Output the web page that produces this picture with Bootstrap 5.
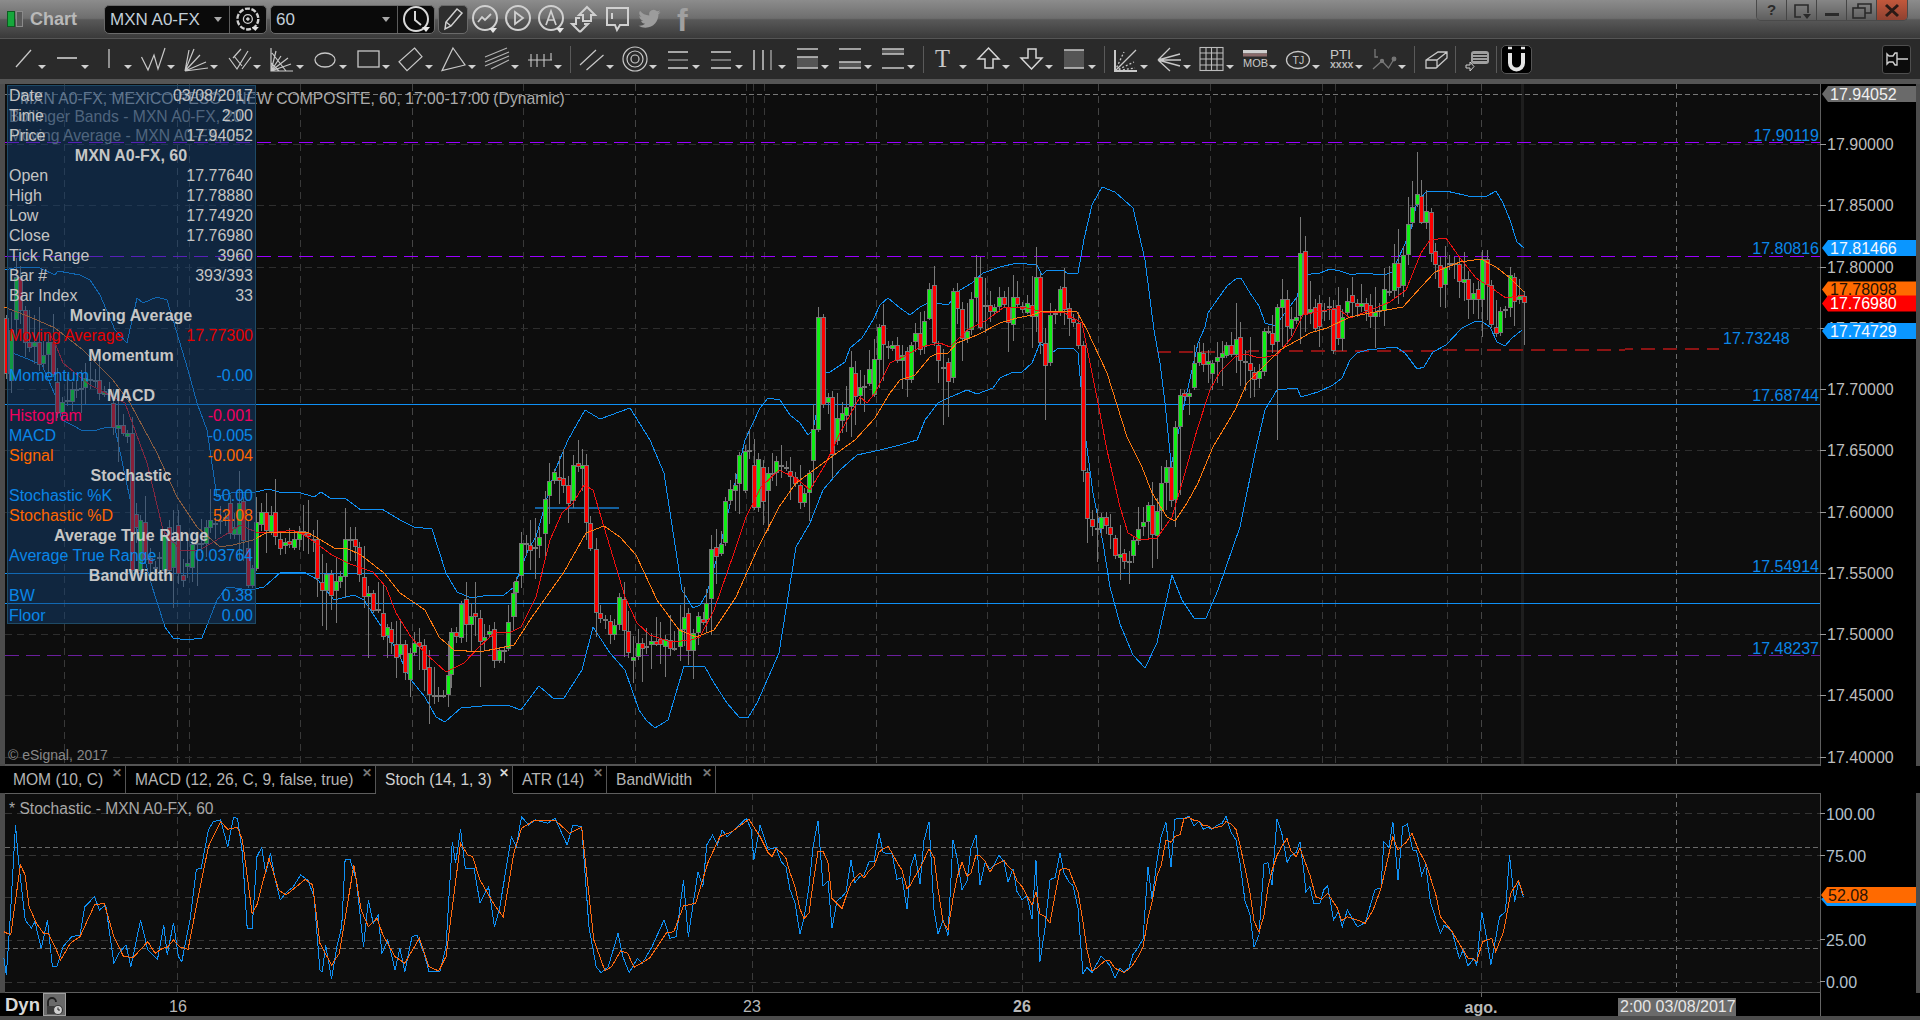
<!DOCTYPE html>
<html lang="en">
<head>
  <meta charset="UTF-8">
  <title>Chart</title>
  <link href="https://cdn.jsdelivr.net/npm/bootstrap@5.3.0/dist/css/bootstrap.min.css" rel="stylesheet">
  <style>
    html, body { margin: 0; height: 1020px; overflow: hidden; }
    body { background: #4c4c4c; font-family: "Liberation Sans", Arial, sans-serif; font-size: 16px; color: #c8c8c8; }
    svg text { font-family: "Liberation Sans", Arial, sans-serif; }
    svg text.es-serif { font-family: "Liberation Serif", serif; }

    /* title bar */
    .es-title { height: 38px; padding-left: 7px; background: linear-gradient(#8c8c8c 0, #6e6e6e 48%, #585858 52%, #3a3a3a 100%); }
    .es-logo { width: 17px; height: 16px; margin-right: 6px; }
    .es-name { width: 74px; font-size: 18px; font-weight: 700; color: #b9b9b9; }
    .es-field { height: 29px; background: #0a0a0a; border: 1px solid #6a6a6a; border-radius: 5px; }
    .es-field-sym { width: 163px; margin-right: 3px; }
    .es-field-int { width: 165px; margin-right: 3px; }
    .es-input { color: #c2ced8; font-size: 17px; padding-left: 5px; border-right: 1px solid #5c5c5c; height: 100%; line-height: 27px; position: relative; }
    .es-input-sym { width: 126px; }
    .es-input-int { width: 127px; }
    .es-input::after { content: ""; position: absolute; right: 7px; top: 11px; border: 4px solid transparent; border-top: 5px solid #a8a8a8; border-bottom: 0; }
    .es-tico { width: 36px; height: 27px; }
    .es-pen { width: 30px; height: 29px; background: #2e2e2e; border: 1px solid #6a6a6a; border-radius: 5px; }
    .es-hico { width: 33px; height: 30px; flex: none; }
    .es-hico-f { width: 33px; height: 38px; flex: none; }
    .es-win { height: 21px; margin-right: 12px; border-radius: 0 0 5px 5px; overflow: hidden; border: 1px solid #4a4a4a; border-top: 0; }
    .es-winbtn { width: 30px; height: 21px; background: linear-gradient(#868686, #5c5c5c); border-right: 1px solid #454545; color: #2a2a2a; font-weight: 700; font-size: 15px; line-height: 20px; text-align: center; }
    .es-winbtn-x { background: linear-gradient(#c2583c, #8c4030); border-right: 0; }

    /* toolbar */
    .es-tools { height: 41px; padding-left: 4px; background: #2a2a2a; border-top: 1px solid #555; }
    .es-tool { width: 43px; height: 30px; position: relative; flex: none; }
    .es-tool svg { position: absolute; left: 4px; top: 1px; width: 30px; height: 28px; }
    .es-caret { position: absolute; right: 1px; bottom: 5px; border: 4px solid transparent; border-top: 4px solid #d0d0d0; border-bottom: 0; }
    .es-sep { width: 1px; height: 27px; background: #5a5a5a; margin: 0 1px 0 7px; flex: none; }
    .es-sep-tight { margin: 0 1px; }
    .es-plain { width: 38px; flex: none; height: 30px; }
    .es-magnet { width: 31px; height: 29px; background: #000; border: 1px solid #555; border-radius: 5px; }
    .es-pin { width: 29px; height: 29px; background: #0c0c0c; border: 1px solid #4e4e4e; border-radius: 3px; margin-right: 9px; }
    .es-strip { height: 5px; background: #555; }

    /* panes */
    .es-pane { position: relative; width: 1920px; }
    .es-pane > svg { display: block; position: absolute; left: 0; top: 0; }
    .es-main { height: 682px; }
    .es-sub { height: 200px; }

    /* data window */
    .es-dw { position: absolute; left: 7px; top: 1px; width: 249px; height: 539px; background: rgba(19, 63, 113, .5); border: 1px solid #1e4a66; padding: 0 2px 0 1px; line-height: 20px; font-size: 16px; color: #c4c4c4; }
    .es-dw-row { height: 20px; white-space: nowrap; }
    .es-dw-head { height: 20px; text-align: center; font-weight: 700; color: #c6c6c6; white-space: nowrap; }
    .c-red { color: #e60000; } .c-mag { color: #f00060; } .c-blue { color: #0a86e8; } .c-org { color: #ff6600; }

    /* study tabs */
    .es-tabs { height: 27px; padding-left: 8px; background: #000; }
    .es-tab { height: 27px; line-height: 27px; padding-left: 9px; border-right: 1px solid #555; color: #b4b4b4; position: relative; flex: none; font-size: 15.6px; }
    .es-tab-first { padding-left: 5px; }
    .es-tab-on { background: #0d0d0d; color: #d0d0d0; }
    .es-tab-x { position: absolute; right: 3px; top: 0; font-size: 12px; line-height: 14px; color: #777; font-weight: 700; }
    .es-tab-on .es-tab-x { color: #d8d8d8; }
    .w-mom { width: 118px; } .w-macd { width: 250px; } .w-stoch { width: 137px; } .w-atr { width: 94px; } .w-bw { width: 109px; }

    /* time axis */
    .es-axis { height: 23px; background: #000; position: relative; padding-left: 5px; }
    .es-axis > svg { position: absolute; left: 0; top: 0; }
    .es-dyn { font-size: 18.5px; font-weight: 700; color: #d8d8d8; width: 38px; line-height: 23px; position: relative; }
    .es-lock { width: 23px; height: 23px; background: #6a6a6a; border: 1px solid #a0a0a0; position: relative; }
  </style>
</head>
<body>

<!-- title bar -->
<div class="es-title d-flex align-items-center">
  <svg class="es-logo flex-none" viewBox="0 0 17 16"><rect x="0.500" y="0.500" width="7" height="15" fill="#17a83c" stroke="#0d5c20"/><rect x="9.500" y="0.500" width="6" height="15" fill="#5a5a5a" stroke="#8a8a8a"/></svg>
  <div class="es-name">Chart</div>
  <div class="es-field es-field-sym d-flex align-items-center">
    <div class="es-input es-input-sym">MXN A0-FX</div>
    <svg class="es-tico" viewBox="0 0 36 27" fill="none" stroke="#d0d0d0"><circle cx="18" cy="13" r="10.500" stroke-width="2.400" stroke-dasharray="5 1.600"/><circle cx="18" cy="13" r="4.500" stroke-width="1.300"/><circle cx="18" cy="13" r="1.300" fill="#d0d0d0"/><path d="M22 21h7l-3.500 4z" fill="#e0e0e0" stroke="none"/></svg>
  </div>
  <div class="es-field es-field-int d-flex align-items-center">
    <div class="es-input es-input-int">60</div>
    <svg class="es-tico" viewBox="0 0 36 27" fill="none" stroke="#d8d8d8" stroke-width="2"><circle cx="18" cy="13" r="12"/><path d="M17 5v9l6 5"/><path d="M24 21h8l-4 5z" fill="#e8e8e8" stroke="none"/></svg>
  </div>
  <div class="es-pen d-flex align-items-center justify-content-center">
    <svg width="24" height="24" viewBox="0 0 24 24" fill="none" stroke="#d0d0d0" stroke-width="1.500"><path d="M4 22l1-7L16 2l5 4L10 19z"/><path d="M5 15l5 4"/></svg>
  </div>
  <svg class="es-hico" viewBox="0 0 33 30" fill="none" stroke="#d0d0d0" stroke-width="2"><circle cx="17" cy="14" r="12"/><path d="M10 18l4-5 3 3 6-6" stroke-width="1.800"/><path d="M21 24h8l-4 5z" fill="#e4e4e4" stroke="none"/></svg>
  <svg class="es-hico" viewBox="0 0 33 30" fill="none" stroke="#d0d0d0" stroke-width="2"><circle cx="17" cy="14" r="12"/><path d="M14 8l8 6-8 6z" stroke-width="1.800"/></svg>
  <svg class="es-hico" viewBox="0 0 33 30" fill="none" stroke="#d0d0d0" stroke-width="2"><circle cx="17" cy="14" r="12"/><path d="M12 21l5-14 5 14M14 16h6" stroke-width="1.700"/><path d="M22 24h8l-4 5z" fill="#e4e4e4" stroke="none"/></svg>
  <svg class="es-hico" viewBox="0 0 33 30" fill="none" stroke="#d0d0d0" stroke-width="2"><path d="M20 3l8 8h-4v6h-8v-6h-4z"/><path d="M13 28l-8-8h4v-6h4M13 28l8-8h-4"/></svg>
  <svg class="es-hico" viewBox="0 0 33 30" fill="none" stroke="#d0d0d0" stroke-width="2"><path d="M7 4h21v17H20l-3 5-2-5H7z"/><path d="M12 9v6"/></svg>
  <svg class="es-hico" viewBox="-4 -3 32 30" fill="#9c9c9c"><path d="M23 4.900c-.8.4-1.700.6-2.600.8.9-.6 1.600-1.400 2-2.500-.9.5-1.800.9-2.900 1.100A4.500 4.500 0 0 0 11.800 8.400 12.900 12.900 0 0 1 2.500 3.700a4.500 4.500 0 0 0 1.400 6 4.500 4.500 0 0 1-2-.6v.1c0 2.200 1.600 4 3.600 4.400-.7.2-1.400.2-2 .1.6 1.800 2.200 3.100 4.200 3.100A9.100 9.100 0 0 1 1 18.700a12.800 12.800 0 0 0 7 2c8.300 0 12.900-6.900 12.900-12.900v-.6c.9-.6 1.600-1.400 2.100-2.300z"/></svg>
  <svg class="es-hico-f" viewBox="0 0 33 38"><text x="11" y="31" font-size="32" font-weight="700" fill="#a0a0a0">f</text></svg>
  <div class="es-win d-flex align-self-start ms-auto">
    <div class="es-winbtn">?</div>
    <div class="es-winbtn"><svg width="22" height="18" viewBox="0 0 22 18" fill="none" stroke="#2a2a2a" stroke-width="1.600"><path d="M17 11V3H4v12h6"/><path d="M12 12h8l-4 5z" fill="#2a2a2a" stroke="none"/></svg></div>
    <div class="es-winbtn"><svg width="18" height="18" viewBox="0 0 18 18"><rect x="2" y="11" width="14" height="3" fill="#2a2a2a"/></svg></div>
    <div class="es-winbtn"><svg width="22" height="18" viewBox="0 0 22 18" fill="none" stroke="#2a2a2a" stroke-width="1.600"><rect x="2" y="6" width="12" height="10"/><path d="M7 6V2h13v9h-6"/></svg></div>
    <div class="es-winbtn es-winbtn-x"><svg width="18" height="18" viewBox="0 0 18 18" stroke="#2a1a16" stroke-width="3"><path d="M3 3l12 11M15 3L3 14"/></svg></div>
  </div>
</div>

<!-- toolbar -->
<div class="es-tools d-flex align-items-center">
  <div class="es-tool"><svg viewBox="0 0 30 28" fill="none" stroke="#c8c8c8" stroke-width="1.300"><path d="M8 22L23 5"/></svg><i class="es-caret"></i></div>
  <div class="es-tool"><svg viewBox="0 0 30 28" fill="none" stroke="#d0d0d0" stroke-width="1.600"><path d="M6 13h20"/></svg><i class="es-caret"></i></div>
  <div class="es-tool"><svg viewBox="0 0 30 28" fill="none" stroke="#c8c8c8" stroke-width="1.300"><path d="M15 4v19"/></svg><i class="es-caret"></i></div>
  <div class="es-tool"><svg viewBox="0 0 30 28" fill="none" stroke="#c8c8c8" stroke-width="1.200"><path d="M4.500 12L11 25l6-15 4 14 7-21"/></svg><i class="es-caret"></i></div>
  <div class="es-tool"><svg viewBox="0 0 30 28" fill="none" stroke="#c8c8c8" stroke-width="1.200"><path d="M5 26L14 4M5 26L20 10M5 26L26 17M5 26L28 23M5 26L9 5"/></svg><i class="es-caret"></i></div>
  <div class="es-tool"><svg viewBox="0 0 30 28" fill="none" stroke="#c8c8c8" stroke-width="1.200"><path d="M6 13l8 11 3-5M11 11l8 10M18 4l-8 9M25 6l-8 13M28 12l-9 12"/></svg><i class="es-caret"></i></div>
  <div class="es-tool"><svg viewBox="0 0 30 28" fill="none" stroke="#c8c8c8" stroke-width="1.200"><path d="M5 3v23h22M5 26L10 6M5 26L15 11M5 26L22 13M5 26L25 19M5 18l8 8M6 8l14 18"/></svg><i class="es-caret"></i></div>
  <div class="es-tool"><svg viewBox="0 0 30 28" fill="none" stroke="#c8c8c8" stroke-width="1.300"><ellipse cx="16" cy="15" rx="10" ry="7"/></svg><i class="es-caret"></i></div>
  <div class="es-tool"><svg viewBox="0 0 30 28" fill="none" stroke="#c8c8c8" stroke-width="1.300"><rect x="6" y="6" width="21" height="16"/></svg><i class="es-caret"></i></div>
  <div class="es-tool"><svg viewBox="0 0 30 28" fill="none" stroke="#c8c8c8" stroke-width="1.200"><path d="M19.500 3L27 11.700 12 25.700 4 16.700z"/></svg><i class="es-caret"></i></div>
  <div class="es-tool"><svg viewBox="0 0 30 28" fill="none" stroke="#c8c8c8" stroke-width="1.200"><path d="M15 3l12 17-23 5.700z"/></svg><i class="es-caret"></i></div>
  <div class="es-tool"><svg viewBox="0 0 30 28" fill="none" stroke="#b4b4b4" stroke-width="1.100"><path d="M4 12L26 3M4 17L28 7M4 21L28 11M10 24l18-9"/></svg><i class="es-caret"></i></div>
  <div class="es-tool"><svg viewBox="0 0 30 28" fill="none" stroke="#c8c8c8" stroke-width="1.100"><path d="M4 15h24M7 9v13M13 9v13M20 9v13M27 8v7"/></svg><i class="es-caret"></i></div>
  <div class="es-sep"></div>
  <div class="es-tool"><svg viewBox="0 0 30 28" fill="none" stroke="#c8c8c8" stroke-width="1.200"><path d="M4 20L20 5M10.500 25L27.500 10"/></svg><i class="es-caret"></i></div>
  <div class="es-tool"><svg viewBox="0 0 30 28" fill="none" stroke="#c8c8c8" stroke-width="1.200"><circle cx="16" cy="14" r="12"/><circle cx="16" cy="14" r="8"/><circle cx="16" cy="14" r="4"/></svg><i class="es-caret"></i></div>
  <div class="es-tool"><svg viewBox="0 0 30 28" fill="none" stroke="#c8c8c8" stroke-width="1.600"><path d="M6 7h20"/><path d="M6 15h20" stroke="#8a8a8a"/><path d="M6 23h20"/></svg><i class="es-caret"></i></div>
  <div class="es-tool"><svg viewBox="0 0 30 28" fill="none" stroke="#c8c8c8" stroke-width="1.600"><path d="M6 7h20"/><path d="M6 15h20" stroke="#8a8a8a"/><path d="M6 23h20"/></svg><i class="es-caret"></i></div>
  <div class="es-tool"><svg viewBox="0 0 30 28" fill="none" stroke="#c8c8c8" stroke-width="1.500"><path d="M6 5v20M15 5v20"/><path d="M23 5v20" stroke="#9a9a9a"/></svg><i class="es-caret"></i></div>
  <div class="es-tool"><svg viewBox="0 0 30 28" fill="none" stroke="#c8c8c8" stroke-width="1.500"><rect x="6" y="12" width="21" height="11" fill="#555" stroke="none"/><path d="M6 4h21M6 12h21M6 23h21"/></svg><i class="es-caret"></i></div>
  <div class="es-tool"><svg viewBox="0 0 30 28" fill="none" stroke="#c8c8c8" stroke-width="1.500"><rect x="5" y="17" width="22" height="6" fill="#555" stroke="none"/><path d="M5 4h22M5 17h22M5 23h22"/></svg><i class="es-caret"></i></div>
  <div class="es-tool"><svg viewBox="0 0 30 28" fill="none" stroke="#c8c8c8" stroke-width="1.500"><rect x="5" y="4" width="22" height="5" fill="#555" stroke="none"/><path d="M5 4h22M5 9h22M5 23h22"/></svg><i class="es-caret"></i></div>
  <div class="es-sep"></div>
  <div class="es-tool"><svg viewBox="0 0 30 28"><text x="6" y="22.400" font-size="24.500" fill="#c8c8c8" class="es-serif">T</text></svg><i class="es-caret"></i></div>
  <div class="es-tool"><svg viewBox="0 0 30 28" fill="none" stroke="#d8d8d8" stroke-width="1.500"><path d="M16.500 3L27 14h-6v9h-8v-9H6z"/></svg><i class="es-caret"></i></div>
  <div class="es-tool"><svg viewBox="0 0 30 28" fill="none" stroke="#d8d8d8" stroke-width="1.500"><path d="M16.500 24L27 13h-6V4h-8v9H6z"/></svg><i class="es-caret"></i></div>
  <div class="es-tool"><svg viewBox="0 0 30 28" fill="none" stroke="#c8c8c8" stroke-width="1.500"><rect x="6" y="5" width="20" height="18" fill="#555" stroke="none"/><path d="M6 5h20M6 23h20"/></svg><i class="es-caret"></i></div>
  <div class="es-sep"></div>
  <div class="es-tool"><svg viewBox="0 0 30 28" fill="none" stroke="#c8c8c8" stroke-width="1.300"><path d="M5 5v21h22" stroke-width="2"/><path d="M5 26L26 5"/><path d="M5 26l9-19M5 26L24 17M5 26l20-3" stroke-dasharray="2 2"/></svg><i class="es-caret"></i></div>
  <div class="es-tool"><svg viewBox="0 0 30 28" fill="none" stroke="#c8c8c8" stroke-width="1.300"><path d="M5 15L17 3M5 15L27 9M5 15H28M5 15l22 6M5 15l12 11"/></svg><i class="es-caret"></i></div>
  <div class="es-tool"><svg viewBox="0 0 30 28" fill="none" stroke="#bcbcbc" stroke-width="1.100"><rect x="4" y="2.500" width="23" height="23"/><path d="M4 8h23M4 14h23M4 20h23M10 2.500v23M15.500 2.500v23M21 2.500v23"/></svg><i class="es-caret"></i></div>
  <div class="es-tool"><svg viewBox="0 0 30 28"><rect x="4" y="5" width="24" height="3.500" fill="#cfcfcf"/><rect x="4" y="8.500" width="24" height="3" fill="#8a6a6a"/><text x="4" y="22" font-size="11" fill="#c8c8c8">MOB</text></svg><i class="es-caret"></i></div>
  <div class="es-tool"><svg viewBox="0 0 30 28" fill="none" stroke="#c8c8c8" stroke-width="1.300"><ellipse cx="16" cy="15" rx="11.500" ry="8.500"/><text x="10.500" y="19" font-size="10.500" fill="#c8c8c8" stroke="none">TJ</text></svg><i class="es-caret"></i></div>
  <div class="es-tool"><svg viewBox="0 0 30 28"><text x="5" y="14" font-size="13.500" fill="#c8c8c8">PTI</text><text x="5" y="23" font-size="10.500" font-weight="700" fill="#b8b8b8">xxxx</text></svg><i class="es-caret"></i></div>
  <div class="es-tool"><svg viewBox="0 0 30 28" fill="none" stroke="#777" stroke-width="1.300"><path d="M7 4v8h3"/><path d="M5 24l9-8 6.500 7L26 14"/><circle cx="26" cy="14" r="1.800" fill="#777"/><circle cx="14" cy="16" r="1.500" fill="#777"/></svg><i class="es-caret"></i></div>
  <div class="es-sep"></div>
  <div class="es-plain"><svg width="38" height="30" viewBox="0 0 38 30" fill="none" stroke="#c8c8c8" stroke-width="1.300"><path d="M10 24v-8L22 8h9v6L20 24zM10 16h11v8M21 16L31 8"/></svg></div>
  <div class="es-sep es-sep-tight"></div>
  <div class="es-plain"><svg width="38" height="30" viewBox="0 0 38 30"><rect x="14" y="7" width="18" height="13" rx="3" fill="#a0a0a0"/><path d="M16 10.500h14M16 13.500h14M16 16.500h14" stroke="#2a2a2a" stroke-width="1.200"/><path d="M9 21h4v-3l4 4.500-4 4.500v-3H9z" fill="#2a2a2a" stroke="#d0d0d0"/></svg></div>
  <div class="es-sep es-sep-tight me-1"></div>
  <div class="es-magnet d-flex align-items-center justify-content-center"><svg width="25" height="27" viewBox="0 0 25 27" fill="none" stroke="#e4e4e4"><path d="M6 7v10a6.500 6.500 0 0 0 13 0V7" stroke-width="4"/><path d="M4 2h4M17 2h4" stroke-width="2.500"/></svg></div>
  <div class="es-pin d-flex align-items-center justify-content-center ms-auto"><svg width="24" height="16" viewBox="0 0 24 16" fill="none" stroke="#cfcfcf" stroke-width="1.400"><path d="M2 3l2 2h4l2-3h2v12h-2l-2-3H4l-2 2zM12 8h11"/></svg></div>
</div>
<div class="es-strip"></div>

<!-- main price pane -->
<div class="es-pane es-main">
  <svg id="mainChart" width="1920" height="682" viewBox="0 84 1920 682"></svg>
  <div class="es-dw">
    <div class="es-dw-row d-flex justify-content-between"><span>Date</span><span>03/08/2017</span></div>
    <div class="es-dw-row d-flex justify-content-between"><span>Time</span><span>2:00</span></div>
    <div class="es-dw-row d-flex justify-content-between"><span>Price</span><span>17.94052</span></div>
    <div class="es-dw-head">MXN A0-FX, 60</div>
    <div class="es-dw-row d-flex justify-content-between"><span>Open</span><span>17.77640</span></div>
    <div class="es-dw-row d-flex justify-content-between"><span>High</span><span>17.78880</span></div>
    <div class="es-dw-row d-flex justify-content-between"><span>Low</span><span>17.74920</span></div>
    <div class="es-dw-row d-flex justify-content-between"><span>Close</span><span>17.76980</span></div>
    <div class="es-dw-row d-flex justify-content-between"><span>Tick Range</span><span>3960</span></div>
    <div class="es-dw-row d-flex justify-content-between"><span>Bar #</span><span>393/393</span></div>
    <div class="es-dw-row d-flex justify-content-between"><span>Bar Index</span><span>33</span></div>
    <div class="es-dw-head">Moving Average</div>
    <div class="es-dw-row d-flex justify-content-between c-red"><span>Moving Average</span><span>17.77300</span></div>
    <div class="es-dw-head">Momentum</div>
    <div class="es-dw-row d-flex justify-content-between c-blue"><span>Momentum</span><span>-0.00</span></div>
    <div class="es-dw-head">MACD</div>
    <div class="es-dw-row d-flex justify-content-between c-mag"><span>Histogram</span><span>-0.001</span></div>
    <div class="es-dw-row d-flex justify-content-between c-blue"><span>MACD</span><span>-0.005</span></div>
    <div class="es-dw-row d-flex justify-content-between c-org"><span>Signal</span><span>-0.004</span></div>
    <div class="es-dw-head">Stochastic</div>
    <div class="es-dw-row d-flex justify-content-between c-blue"><span>Stochastic %K</span><span>50.00</span></div>
    <div class="es-dw-row d-flex justify-content-between c-org"><span>Stochastic %D</span><span>52.08</span></div>
    <div class="es-dw-head">Average True Range</div>
    <div class="es-dw-row d-flex justify-content-between c-blue"><span>Average True Range</span><span>0.03764</span></div>
    <div class="es-dw-head">BandWidth</div>
    <div class="es-dw-row d-flex justify-content-between c-blue"><span>BW</span><span>0.38</span></div>
    <div class="es-dw-row d-flex justify-content-between c-blue"><span>Floor</span><span>0.00</span></div>
  </div>
</div>

<!-- study tabs -->
<div class="es-tabs d-flex">
  <div class="es-tab es-tab-first w-mom">MOM (10, C)<span class="es-tab-x">✕</span></div>
  <div class="es-tab w-macd">MACD (12, 26, C, 9, false, true)<span class="es-tab-x">✕</span></div>
  <div class="es-tab es-tab-on w-stoch">Stoch (14, 1, 3)<span class="es-tab-x">✕</span></div>
  <div class="es-tab w-atr">ATR (14)<span class="es-tab-x">✕</span></div>
  <div class="es-tab w-bw">BandWidth<span class="es-tab-x">✕</span></div>
</div>

<!-- stochastic pane -->
<div class="es-pane es-sub">
  <svg id="subChart" width="1920" height="200" viewBox="0 793 1920 200"></svg>
</div>

<!-- time axis -->
<div class="es-axis d-flex">
  <svg width="1920" height="23" viewBox="0 993 1920 23">
    <g fill="#b8b8b8" font-size="16" text-anchor="middle">
      <text x="178" y="1012">16</text>
      <text x="752" y="1012">23</text>
      <text x="1022" y="1012" font-weight="700">26</text>
      <text x="1481" y="1013" font-weight="700">ago.</text>
    </g>
    <rect x="1618" y="998" width="118" height="18" fill="#6a6a6a"/>
    <text x="1620" y="1012" font-size="16" fill="#e6e6e6">2:00 03/08/2017</text>
    <path d="M1820.500 993v23M1481.500 993v4" stroke="#666"/>
  </svg>
  <div class="es-dyn">Dyn</div>
  <div class="es-lock"><svg width="21" height="21" viewBox="0 0 21 21" fill="none" stroke="#1e1e1e" stroke-width="1.800"><path d="M4 10V6a4 4 0 0 1 8 0"/><rect x="3" y="10" width="9" height="8" fill="#3a3a3a" stroke="none"/><circle cx="14" cy="14" r="4.500" fill="#d0d0d0" stroke="#3a3a3a" stroke-width="1.200"/><path d="M14 11.500V14h2" stroke-width="1"/></svg></div>
</div>

<script src="https://cdn.jsdelivr.net/npm/bootstrap@5.3.0/dist/js/bootstrap.bundle.min.js"></script>
<script>
  // bars traced from the chart, in segments: zoomX type top bottom
  const segs = [
    { x: z => z / 3, y: z => 80 + z / 3, d: '19 R 715 880,33 G 750 900,47 G 590 715,61 R 590 690,75 R 690 785,88 R 785 800,103 G 785 797,116 R 785 850,130 G 825 850,145 G 785 820,158 R 785 880' },
    { x: z => z / 3, y: z => 370 + z / 3, d: '172 R 35 125,187 G 95 125,201 D 90 90,215 G 58 95,228 D 58 58,242 D 55 55,256 G 25 52,270 D 28 28,285 D 30 30,298 R 30 70,312 G 62 70,326 D 70 70,340 R 98 170,353 G 165 172,368 R 165 190,381 G 188 194,395 R 190 600,408 R 432 470,421 G 450 600,435 R 455 565,450 R 565 580,464 D 590 590,478 D 560 560,492 G 495 600,507 R 470 600,520 G 515 590,535 R 465 610,548 R 615 630,562 G 580 590,575 G 522 590,590 D 520 520,603 D 518 518,617 G 470 518,630 G 450 470,645 D 458 458,660 D 450 450,675 D 440 440,690 R 400 490,703 G 470 490,716 G 398 490,729 R 392 510,743 R 535 645,756 G 595 645' },
    { x: z => 250 + z / 2.8, y: z => 440 + z / 3, d: '18 G 245 382,31 G 215 250,45 R 215 268,58 G 226 274,71 R 215 288,85 R 296 322,97 G 305 312,110 R 303 306,124 G 296 320,136 G 272 296,148 R 272 278,161 R 278 288,175 D 296 296,188 R 296 412,201 R 425 450,214 G 402 450,227 R 402 466,240 G 424 450,253 G 408 424,267 G 296 408,280 D 296 296,293 R 298 318,304 R 322 402,318 R 410 466,331 G 458 466,343 R 458 508,357 D 507 507,371 R 518 588,383 G 562 586,396 R 566 606,409 R 612 650,421 G 612 642,435 R 612 695,447 G 638 715,460 G 608 634,474 R 606 618,487 R 616 688,500 R 680 762,514 D 764 764,527 D 764 764,541 D 764 764,553 G 704 760,563 G 575 702,578 R 575 588,592 G 493 592,604 R 478 552,618 G 528 552,630 R 520 526,643 R 535 604,656 G 592 598,668 G 572 580,683 R 568 660,696 G 630 660,710 D 630 630,722 G 545 624,735 G 458 528,746 G 422 455,760 G 308 405,773 D 310 310,785 R 316 330,797 D 320 320,810 G 292 316,825 G 178 280,838 G 122 165,851 G 97 122,864 R 111 118,877 R 115 136,890 R 136 190,903 G 76 180,917 R 70 78,929 G 75 80,942 R 74 246,953 R 248 322,968 R 326 514,981 R 518 534,994 D 536 536,1007 R 542 582,1020 G 556 582,1033 G 472 552,1046 R 476 570,1059 R 572 636,1072 G 650 658,1085 G 608 646,1097 R 608 624,1110 D 618 618,1123 G 604 612,1136 R 602 608,1149 R 598 612,1162 G 598 618,1175 R 600 624,1188 D 624 624,1203 G 568 618,1214 G 530 566,1227 R 518 628,1241 G 578 628,1254 G 528 575,1267 R 536 542,1278 G 488 536,1291 G 326 474,1305 R 320 348,1318 G 312 338,1330 G 184 306,1345 G 146 180,1358 G 134 148,1370 G 46 130,1385 G 32 150,1398 D 30 30,1410 R 74 200,1422 G 56 200,1435 R 82 184,1449 G 100 152,1461 D 98 98,1474 G 62 94,1488 D 76 76,1500 D 80 80,1513 R 92 106,1527 R 112 130,1540 R 134 186,1552 G 158 184,1565 G 100 156' },
    { x: z => 800 + z / 3, y: z => 240 + z / 3, d: '40 G 568 660,55 G 232 568,68 R 232 492,83 G 472 486,97 R 470 640,111 G 535 600,125 G 520 540,138 G 502 525,152 G 382 498,165 R 398 466,181 G 442 466,193 D 437 437,208 G 388 430,221 G 356 460,236 G 262 358,250 R 254 312,264 D 318 318,277 G 315 320,291 R 314 358,305 G 344 358,320 R 334 418,334 G 316 418,346 G 280 305,361 R 280 328,373 G 244 318,388 G 146 232,403 R 134 304,415 R 314 360,430 D 380 380,445 R 367 424,458 G 154 412,472 R 154 205,487 R 208 294,500 G 272 292,513 G 178 268,529 G 112 172,541 R 112 262,555 D 196 196,569 R 196 214,583 G 202 214,598 G 172 198,611 R 172 192,625 R 200 244,640 G 172 254,652 R 172 192,667 R 197 207,682 G 188 214,695 R 194 228,709 G 110 226,721 R 110 304,736 R 308 374,751 G 226 368,765 D 220 220,779 G 146 216,793 R 140 205,806 R 203 234,820 R 238 244,835 R 248 314' },
    { x: z => 1070 + z / 3, y: z => 330 + z / 3, d: '38 R 45 420,52 R 425 562,67 R 568 588,80 D 593 593,94 G 562 594,107 R 562 586,121 R 590 612,136 R 625 676,149 G 672 676,163 R 670 694,177 D 692 692,190 G 630 676,205 G 598 630,220 G 577 589,233 G 526 574,247 R 526 612,260 G 542 615,274 G 458 538,289 G 410 454,302 R 410 508,316 G 292 508' },
    { x: z => 1170 + z / 3, y: z => 200 + z / 3, d: '30 G 584 678,43 R 580 586,58 G 578 583,73 G 488 560,86 G 457 487,100 R 458 490,113 G 482 492,127 G 490 520,142 G 472 485,155 G 458 470,169 G 434 463,184 R 434 462,197 G 416 462,211 R 412 480,226 D 484 484,239 R 490 512,253 R 515 535,268 G 514 535,281 G 394 515,294 D 392 392,307 R 398 430,322 G 322 424,337 G 298 322,350 R 298 378,364 G 358 384,379 G 350 360,391 G 160 346,406 R 152 340,421 G 326 336,434 R 320 382,448 R 310 380,462 D 330 330,476 D 318 318,490 R 326 448,503 R 314 414,517 G 350 414,532 G 302 336,545 R 286 306,560 R 310 318,574 G 310 318,587 R 308 328' },
    { x: z => 1360 + z / 2.8, y: z => 130 + z / 3, d: '28 R 525 558,41 G 545 556,54 D 540 540,68 G 478 542,81 D 482 482,94 G 398 478,107 R 398 470,120 G 376 466,133 G 282 372,146 G 232 276,159 G 193 222,172 R 197 274,185 G 243 276,198 R 245 368,211 R 362 402,224 R 406 472,237 G 410 460,250 D 400 400,263 D 400 400,276 R 402 454,290 G 447 454,303 R 447 508,316 G 490 508,329 R 478 508,342 G 388 508,355 R 388 462,368 R 464 580,380 R 592 610,393 G 542 606,406 D 536 536,419 G 435 532,432 R 440 513,445 G 497 505,458 R 497 516' }
  ];

  // a few long wicks read off the chart: x, top, bottom
  const wickFix = [[1416, 152, 0], [1300, 217, 0], [1305, 236, 0], [369, 0, 658], [479, 0, 687], [943, 0, 425], [948, 0, 417], [1277, 0, 440], [1485, 0, 345], [1522, 270, 330], [688, 0, 665], [1045, 0, 420], [1180, 0, 495]];

  let seed = 7;
  function rnd() { seed = (seed * 16807) % 2147483647; return seed / 2147483647; }

  const bars = [];
  segs.forEach(s => s.d.split(',').forEach(t => {
    const p = t.split(' ');
    const x = Math.round(s.x(+p[0])), top = s.y(+p[2]), bot = s.y(+p[3]);
    let hi = top - 3 - rnd() * rnd() * 38, lo = bot + 3 + rnd() * rnd() * 40;
    wickFix.forEach(f => {
      if (Math.abs(f[0] - x) < 2) { if (f[1]) hi = f[1]; if (f[2]) lo = f[2]; }
    });
    bars.push({ x, t: p[1], top, bot, hi, lo });
  }));

  const upper = '5,270 18,267 40,268 55,275 58,271 80,275 90,280 100,295 115,330 127,343 137,298 143,303 157,297 167,300 188,370 197,403 207,430 217,497 235,492 256,492 268,489 279,492 298,492 314,497 321,492 330,498 346,499 361,510 382,509 400,520 414,527 432,529 446,573 457,592 471,598 489,595 504,595 514,587 529,548 536,537 554,473 568,440 585,410 600,419 630,408 650,440 664,473 682,590 693,608 700,605 707,593 721,543 745,440 760,408 768,398 780,400 790,415 800,423 808,435 813,430 817,410 825,373 830,372 845,362 850,348 862,338 873,320 880,305 888,298 900,308 910,315 920,307 930,302 948,305 960,290 972,283 983,273 1000,267 1017,263 1037,265 1042,275 1047,270 1063,270 1068,274 1078,273 1084,239 1092,205 1102,187 1115,192 1133,208 1145,260 1154,330 1160,363 1165,403 1170,453 1171,467 1183,410 1192,370 1198,343 1205,327 1208,313 1217,300 1227,286 1237,278 1241,278 1250,293 1259,306 1265,323 1275,326 1285,313 1297,297 1303,275 1320,273 1330,269 1340,271 1352,275 1360,273 1385,275 1392,272 1410,233 1417,202 1426,192 1446,191 1464,195 1472,197 1487,196 1496,191 1503,203 1510,220 1517,242 1524,248';
  const lower = '10,352 23,357 42,365 55,395 62,420 72,425 83,431 97,430 107,427 115,428 133,513 150,580 165,627 173,638 187,640 202,638 217,600 227,587 250,590 264,587 280,573 304,572 318,580 334,600 354,595 364,600 375,617 395,647 411,680 425,697 436,717 445,722 461,708 482,706 507,705 521,710 539,686 554,699 564,698 582,670 593,627 610,653 625,670 639,710 646,720 655,728 668,720 684,666 705,667 714,683 727,703 739,717 748,718 757,703 779,653 796,547 810,523 823,490 840,470 857,455 880,450 900,445 917,440 925,420 938,403 948,398 967,390 977,394 993,388 1000,378 1013,372 1022,372 1032,363 1040,343 1052,353 1057,349 1073,348 1078,353 1085,433 1093,493 1103,543 1110,587 1120,624 1133,655 1145,668 1157,643 1172,575 1182,600 1194,618 1206,618 1218,590 1240,527 1255,453 1265,410 1277,390 1297,388 1301,397 1318,392 1333,385 1342,378 1350,360 1357,353 1367,350 1396,347 1405,353 1417,369 1424,367 1433,352 1446,345 1462,328 1474,322 1481,321 1490,327 1497,342 1505,346 1512,338 1522,330';
  const red = '50,335 55,343 63,363 90,385 125,403 147,463 163,530 180,550 200,550 225,535 240,525 256,532 271,533 293,530 304,535 316,543 332,555 350,564 373,572 386,587 396,613 411,637 425,653 446,672 464,663 479,647 496,632 509,633 521,627 536,597 550,540 562,513 573,503 584,485 593,490 607,537 625,597 637,623 650,635 671,642 691,640 700,637 714,610 734,553 746,517 761,487 779,470 796,478 810,490 825,465 840,433 860,397 867,403 875,393 890,363 907,355 920,347 940,343 950,347 967,330 987,320 1003,308 1023,307 1043,312 1063,312 1082,323 1098,403 1107,450 1120,507 1128,533 1140,540 1157,538 1172,517 1185,473 1197,430 1210,390 1220,372 1235,357 1245,354 1260,358 1277,355 1292,337 1303,315 1317,312 1337,308 1350,318 1363,313 1390,302 1406,290 1421,253 1430,240 1446,238 1460,258 1476,278 1490,287 1506,298 1524,295';
  const orange = '4,307 30,317 55,328 83,350 113,380 130,403 157,453 177,497 197,527 220,547 233,545 253,540 266,533 286,532 307,532 321,540 334,548 346,548 361,555 384,573 400,593 425,610 439,637 454,650 479,652 500,648 514,645 532,617 564,572 586,533 604,526 620,537 636,555 657,600 679,630 696,637 714,630 736,597 757,550 779,507 796,483 807,475 830,458 855,440 875,418 890,393 900,380 915,375 930,357 938,353 948,353 957,343 977,335 1000,323 1017,318 1032,315 1043,311 1063,311 1077,312 1087,330 1107,373 1127,437 1142,467 1152,493 1167,517 1175,521 1187,503 1198,483 1213,447 1235,410 1247,383 1267,363 1280,350 1298,340 1310,333 1327,328 1350,317 1370,313 1403,307 1421,287 1435,272 1460,262 1481,259 1496,267 1510,278 1524,292';

  const strong = [177, 412, 635, 876, 1098, 1321, 1481];
  const vgrid = [64, 177, 189, 300, 412, 523, 635, 746, 753, 764, 876, 987, 1023, 1098, 1210, 1322, 1335, 1447, 1481];

  const ln = (x1, y1, x2, y2, c, extra) => `<line x1="${x1}" y1="${y1}" x2="${x2}" y2="${y2}" stroke="${c}" ${extra || ''}/>`;
  const txt = (x, y, s, c, extra) => `<text x="${x}" y="${y}" fill="${c}" font-size="16" dominant-baseline="central" ${extra || ''}>${s}</text>`;
  const poly = (pts, c) => `<polyline points="${pts}" fill="none" stroke="${c}" stroke-width="1" shape-rendering="crispEdges"/>`;
  function tag(y, s, bg, fg, h) {
    h = h || 16;
    return `<polygon points="1822,${y} 1828,${y - h / 2} 1916,${y - h / 2} 1916,${y + h / 2} 1828,${y + h / 2}" fill="${bg}"/>` + txt(1830, y, s, fg);
  }
  const priceY = p => 144 + (17.9 - p) * 1225;

  // main pane
  let m = '';
  m += `<rect x="0" y="84" width="1920" height="682" fill="#000"/><rect x="5" y="84" width="1815" height="680" fill="#0d0d0d"/>`;
  m += `<rect x="0" y="84" width="5" height="682" fill="#4c4c4c"/><rect x="1916" y="84" width="4" height="682" fill="#4c4c4c"/><rect x="5" y="764" width="1815" height="2" fill="#555"/>`;
  m += '<g shape-rendering="crispEdges">';
  vgrid.forEach(x => m += ln(x + .5, 84, x + .5, 764, strong.includes(x) ? '#444' : '#383838', 'stroke-dasharray="7 5"'));
  for (let i = 0; i <= 10; i++) m += ln(5, Math.round(priceY(17.4 + i * .05)) + .5, 1820, Math.round(priceY(17.4 + i * .05)) + .5, '#2e2e2e', 'stroke-dasharray="7 5"');
  m += `<rect x="1521" y="84" width="3" height="680" fill="#1e1e1e"/>`;
  m += ln(1676.5, 84, 1676.5, 764, '#6a6a6a', 'stroke-dasharray="5 4"');
  m += ln(5, 94.5, 1820, 94.5, '#777', 'stroke-dasharray="5 3"');
  m += ln(5, 404.5, 1820, 404.5, '#0f90f5');
  m += ln(5, 573.5, 1820, 573.5, '#0f90f5');
  m += ln(5, 603.5, 1820, 603.5, '#0f90f5');
  m += ln(535, 507.5, 619, 507.5, '#14609e', 'stroke-width="2"');
  m += ln(5, 142.5, 1820, 142.5, '#9a00ff', 'stroke-dasharray="14 7"');
  m += ln(5, 256.5, 1820, 256.5, '#9a00ff', 'stroke-dasharray="14 7"');
  m += ln(5, 655.5, 1820, 655.5, '#6a1f9c', 'stroke-dasharray="14 7"');
  m += '</g>';
  m += ln(1157, 352, 1719, 349, '#8c1414', 'stroke-width="2" stroke-dasharray="14 8" shape-rendering="crispEdges"');
  m += poly(upper, '#0f90f5') + poly(lower, '#0f90f5');

  // candles
  m += '<g shape-rendering="crispEdges">';
  bars.forEach(b => m += ln(b.x + .5, b.hi, b.x + .5, b.lo, '#787878'));
  bars.forEach(b => {
    if (b.t === 'D') {
      m += `<rect x="${b.x - 2}" y="${Math.round(b.top)}" width="5" height="2" fill="#787878"/>`;
    } else {
      const h = Math.max(b.bot - b.top, 3);
      m += `<rect x="${b.x - 1.5}" y="${Math.round(b.top) + .5}" width="4" height="${Math.round(h)}" fill="${b.t === 'G' ? '#0fee14' : '#ff0000'}" stroke="#787878"/>`;
    }
  });
  m += '</g>';
  m += poly(red, '#f01010') + poly(orange, '#ff7a10');

  // legends under the data window
  m += txt(20, 98, 'MXN A0-FX, MEXICO PESO - NEW COMPOSITE, 60, 17:00-17:00 (Dynamic)', '#aaa', 'style="font-size:15.7px"');
  m += txt(9, 116, 'Bollinger Bands - MXN A0-FX, 20', '#8a8a8a', 'style="font-size:15.7px"');
  m += txt(9, 135, 'Moving Average - MXN A0-FX, 20', '#8a8a8a', 'style="font-size:15.7px"');
  m += txt(8, 755, '© eSignal, 2017', '#888', 'style="font-size:14px"');

  // price levels
  [['17.90119', 135], ['17.80816', 248], ['17.68744', 395], ['17.54914', 566], ['17.48237', 648]].forEach(l => {
    m += txt(1819, l[1], l[0], '#0a86e8', 'text-anchor="end"');
  });
  m += txt(1723, 338, '17.73248', '#0a86e8');

  // price axis
  m += ln(1820.5, 84, 1820.5, 766, '#5e5e5e');
  for (let i = 0; i <= 10; i++) {
    const y = Math.round(priceY(17.4 + i * .05));
    m += ln(1820, y + .5, 1826, y + .5, '#9a9a9a') + txt(1827, y + .5, (17.4 + i * .05).toFixed(5), '#bdbdbd');
  }
  m += tag(94, '17.94052', '#6a6a6a', '#f0f0f0');
  m += tag(248, '17.81466', '#0a96ff', '#f4f8ff');
  m += tag(289.5, '17.78098', '#ff6a00', '#241005');
  m += tag(303.5, '17.76980', '#ff0000', '#ffffff');
  m += tag(331, '17.74729', '#0a96ff', '#f4f8ff');
  document.getElementById('mainChart').innerHTML = m;

  // stochastic: traced at both ends, computed from the bars in between
  const tracedK = '8,655 13,705 20,560 32,255 38,360 52,540 65,565 72,545 85,625 98,540 108,680 118,678 130,620 148,590 165,585 175,500 195,470 205,510 218,495 235,670 245,640 260,615 270,680 290,540 305,630 325,658 338,555 345,645 358,548 368,650 375,665 392,540 405,388 415,385 430,270 440,245 455,240 470,320 482,232 490,235 500,340 510,565 520,565 530,350 540,322 548,400 558,340 568,420 578,480 590,458 605,440 620,405 635,420 648,470 660,690 665,695 672,615 684,717 695,620 705,560 712,360 722,358 735,420 750,620 760,480 770,550 780,525 788,640 800,600 815,690 825,625 835,695 850,590 860,585 875,640 885,695 908,693 920,620 933,305 940,370 950,268 960,385 978,385 990,488 1008,440 1020,560 1030,510 1055,290 1065,320 1076,230 1090,255 1105,240 1130,250 1145,235 1170,315 1182,255 1200,260 1215,560 1230,680 1240,698 1255,680 1275,580 1285,650 1298,698 1315,655 1325,670 1345,620 1370,540 1382,595 1395,590 1410,420 1420,590 1440,395 1450,440 1458,315 1470,285 1480,315 1490,270 1500,290 1520,262 1540,235 1550,270 1555,360 1568,255';
  const tracedD = '8,575 22,585 42,375 52,405 60,500 75,550 90,580 100,582 115,625 125,660 145,610 165,590 195,495 215,490 235,590 255,650 275,652 305,605 320,640 335,625 345,622 358,600 370,620 388,628 405,500 430,320 455,245 470,268 490,262 500,300 520,520 530,495 555,355 575,450 590,465 630,418 645,435 660,610 684,675 700,640 730,375 745,510 760,560 778,535 790,585 815,650 835,670 865,595 885,680 905,693 920,650 950,310 965,345 975,350 990,420 1020,495 1038,530 1060,340 1076,265 1100,243 1145,240 1175,280 1200,262 1225,600 1248,692 1262,680 1280,633 1295,640 1308,682 1340,655 1375,578 1390,575 1410,498 1435,490 1460,370 1485,290 1510,275 1545,238 1568,290';
  const endK = '0,245 10,340 15,395 25,380 35,430 50,432 60,390 70,378 85,480 97,455 107,500 120,450 145,500 165,488 190,388 205,385 212,245 225,262 235,185 248,360 260,200 272,192 285,270 295,272 308,345 318,315 330,425 355,520 365,495 385,515 403,595 413,570 425,618 440,595 447,618 460,455 470,520 483,615 505,470 520,455 530,285 543,425 553,365 565,410';
  const endD = '0,265 25,345 40,410 55,418 70,400 95,445 105,482 120,470 145,480 165,490 185,450 205,385 235,230 248,270 270,245 283,220 300,270 320,315 345,410 355,470 385,515 405,555 425,595 435,595 447,605 462,545 485,535 495,575 515,515 533,400 553,362 565,405';
  const fromZoomL = s => s.split(' ').map(p => { const a = p.split(','); return [+a[0] / 2.063, 740 + a[1] / 3]; });
  const fromZoomR = s => s.split(' ').map(p => { const a = p.split(','); return [1300 + a[0] / 2.53, 760 + a[1] / 3]; });

  const closes = bars.map(b => b.t === 'G' ? b.top : b.t === 'R' ? b.bot : b.top);
  const kVals = bars.map((b, i) => {
    const from = Math.max(0, i - 13);
    let hh = 1e9, ll = -1e9;
    for (let j = from; j <= i; j++) { hh = Math.min(hh, bars[j].hi); ll = Math.max(ll, bars[j].lo); }
    return (ll - closes[i]) / (ll - hh);
  });
  const dVals = kVals.map((v, i) => (v + kVals[Math.max(0, i - 1)] + kVals[Math.max(0, i - 2)]) / 3);
  const mid = (vals) => bars.map((b, i) => [b.x, 982 - vals[i] * 169]).filter(p => p[0] > 765 && p[0] < 1298);
  const join = a => a.map(p => p[0].toFixed(1) + ',' + p[1].toFixed(1)).join(' ');
  const kLine = join(fromZoomL(tracedK).concat(mid(kVals), fromZoomR(endK)));
  const dLine = join(fromZoomL(tracedD).concat(mid(dVals), fromZoomR(endD)));

  let s = '';
  s += `<rect x="0" y="793" width="1920" height="200" fill="#000"/><rect x="5" y="793" width="1815" height="200" fill="#0d0d0d"/>`;
  s += `<rect x="0" y="793" width="5" height="200" fill="#4c4c4c"/><rect x="1916" y="793" width="4" height="200" fill="#4c4c4c"/>`;
  s += '<g shape-rendering="crispEdges">';
  [177, 752, 1022, 1481].forEach(x => s += ln(x + .5, 793, x + .5, 993, '#3a3a3a', 'stroke-dasharray="7 5"'));
  s += ln(1676.5, 793, 1676.5, 993, '#6a6a6a', 'stroke-dasharray="5 4"');
  [813, 855, 897, 940, 982].forEach(y => s += ln(5, y + .5, 1820, y + .5, '#343434', 'stroke-dasharray="7 5"'));
  [847, 948].forEach(y => s += ln(5, y + .5, 1820, y + .5, '#6a6a6a', 'stroke-dasharray="5 3"'));
  s += ln(5, 992.5, 1820, 992.5, '#5e5e5e') + ln(5, 793.5, 376, 793.5, '#5e5e5e') + ln(513, 793.5, 1820, 793.5, '#5e5e5e') + ln(1820.5, 793, 1820.5, 993, '#5e5e5e');
  s += '</g>';
  s += poly(kLine, '#0f90f5') + poly(dLine, '#ff6a10');
  s += txt(9, 808, '* Stochastic - MXN A0-FX, 60', '#a8a8a8', 'style="font-size:15.6px"');
  [['100.00', 814], ['75.00', 856], ['25.00', 940], ['0.00', 982]].forEach(l => {
    s += ln(1820, l[1] - .5, 1825, l[1] - .5, '#999') + txt(1826, l[1], l[0], '#b4c0cc');
  });
  s += `<polygon points="1821,899 1827,895 1916,895 1916,906 1827,906" fill="#0a96ff"/>`;
  s += `<polygon points="1821,895 1827,887 1916,887 1916,903 1827,903" fill="#ff6a00"/>`;
  s += txt(1828, 895, '52.08', '#2a1206');
  document.getElementById('subChart').innerHTML = s;
</script>
</body>
</html>
